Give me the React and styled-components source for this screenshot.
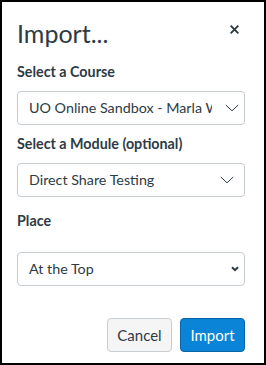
import React from "react";
import styled, { createGlobalStyle } from "styled-components";

const Global = createGlobalStyle`
  html, body { margin: 0; padding: 0; background: #fff; }
  body { font-family: Lato, "Noto Sans", sans-serif; color: #2d3b45; }
  * { box-sizing: border-box; }
`;

const Dialog = styled.div`
  width: 266px;
  height: 365px;
  border: 2px solid #000;
  background: #fff;
  padding: 0 19px 0 15px;
  display: flex;
  flex-direction: column;
`;

const Header = styled.div`
  display: flex;
  align-items: flex-start;
  justify-content: space-between;
  padding-top: 14px;
  height: 50px;
`;

const Title = styled.h1`
  margin: 0;
  font-size: 25px;
  font-weight: 400;
  line-height: 34px;
  color: #2d3b45;
`;

const Close = styled.button`
  border: 0;
  background: none;
  padding: 0;
  margin: 9px 6px 0 0;
  width: 9px;
  height: 9px;
  display: flex;
  align-items: center;
  justify-content: center;
  cursor: pointer;
`;

const Field = styled.div`
  display: flex;
  flex-direction: column;
  margin-top: ${(p) => p.$top}px;
`;

const Label = styled.label`
  font-size: 14.3px;
  font-weight: 700;
  line-height: 20px;
  color: #2d3b45;
`;

const SelectBox = styled.div`
  margin-top: ${(p) => p.$gap}px;
  height: 34px;
  border: 1px solid #c7cdd1;
  border-radius: 4px;
  display: flex;
  align-items: center;
  padding: 0 ${(p) => p.$pr}px 0 11px;
  gap: ${(p) => p.$tg}px;
  background: #fff;
`;

const SelectText = styled.span`
  flex: 1;
  font-size: 14.3px;
  line-height: 20px;
  white-space: nowrap;
  overflow: hidden;
  color: #2d3b45;
`;

const Footer = styled.div`
  display: flex;
  justify-content: flex-end;
  gap: 8px;
  margin-top: 32px;
`;

const Button = styled.button`
  height: 34px;
  min-width: 65px;
  padding: 0 9px;
  border-radius: 4px;
  font-family: Lato, "Noto Sans", sans-serif;
  font-size: 15px;
  line-height: 20px;
  cursor: pointer;
  border: 1px solid ${(p) => (p.$primary ? "#0a64a8" : "#c7cdd1")};
  background: ${(p) => (p.$primary ? "#0a84d6" : "#f5f5f5")};
  color: ${(p) => (p.$primary ? "#fff" : "#2d3b45")};
`;

const Chevron = () => (
  <svg width="14" height="8" viewBox="0 0 14 8" fill="none">
    <path d="M0.8 1 L7 6.8 L13.2 1" stroke="#2d3b45" strokeWidth="1" />
  </svg>
);

const BoldChevron = () => (
  <svg width="8" height="6" viewBox="0 0 8 6" fill="none">
    <path d="M1 1.2 L4 4.2 L7 1.2" stroke="#2d3b45" strokeWidth="2" />
  </svg>
);

const CloseIcon = () => (
  <svg width="9" height="9" viewBox="0 0 9 9">
    <path d="M0.7 0.7 L8.3 8.3 M8.3 0.7 L0.7 8.3" stroke="#2d3b45" strokeWidth="1.9" />
  </svg>
);

export default function App() {
  return (
    <>
      <Global />
      <Dialog>
        <Header>
          <Title>Import...</Title>
          <Close aria-label="Close">
            <CloseIcon />
          </Close>
        </Header>
        <Field $top={10}>
          <Label>Select a Course</Label>
          <SelectBox $gap={9} $pr={5} $tg={13}>
            <SelectText>UO Online Sandbox - Marla Willner</SelectText>
            <Chevron />
          </SelectBox>
        </Field>
        <Field $top={9}>
          <Label>Select a Module (optional)</Label>
          <SelectBox $gap={9} $pr={10} $tg={8}>
            <SelectText>Direct Share Testing</SelectText>
            <Chevron />
          </SelectBox>
        </Field>
        <Field $top={14}>
          <Label>Place</Label>
          <SelectBox $gap={21} $pr={5} $tg={8}>
            <SelectText>At the Top</SelectText>
            <BoldChevron />
          </SelectBox>
        </Field>
        <Footer>
          <Button>Cancel</Button>
          <Button $primary>Import</Button>
        </Footer>
      </Dialog>
    </>
  );
}
